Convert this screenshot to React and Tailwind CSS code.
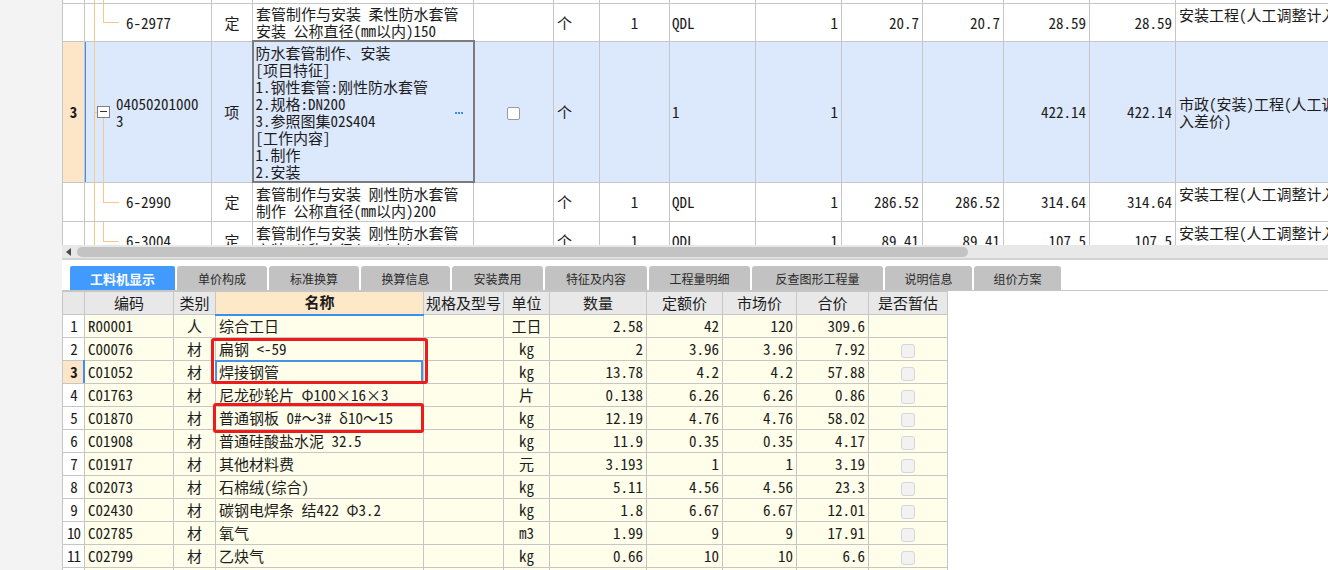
import React from "react";

const line = "bg-[#f5c890]";

const topRows = [
  {
    code: "6-2977",
    name: ["套管制作与安装 柔性防水套管", "安装 公称直径(mm以内)150"],
    v: ["20.7", "20.7", "28.59", "28.59"],
    h: "h-[38px]",
  },
  {
    code: "6-2990",
    name: ["套管制作与安装 刚性防水套管", "制作 公称直径(mm以内)200"],
    v: ["286.52", "286.52", "314.64", "314.64"],
    h: "h-[39px]",
  },
  {
    code: "6-3004",
    name: ["套管制作与安装 刚性防水套管", "安装 公称直径(mm以内)200"],
    v: ["89.41", "89.41", "107.5", "107.5"],
    h: "h-[39px]",
  },
];

const tabs = [
  { t: "单价构成", w: "w-[90px]" },
  { t: "标准换算", w: "w-[90px]" },
  { t: "换算信息", w: "w-[89px]" },
  { t: "安装费用", w: "w-[91px]" },
  { t: "特征及内容", w: "w-[102px]" },
  { t: "工程量明细", w: "w-[101px]" },
  { t: "反查图形工程量", w: "w-[131px]" },
  { t: "说明信息", w: "w-[87px]" },
  { t: "组价方案", w: "w-[87px]" },
];

const items = [
  ["R00001", "人", "综合工日", "工日", "2.58", "42", "120", "309.6"],
  ["C00076", "材", "扁钢 <-59", "kg", "2", "3.96", "3.96", "7.92"],
  ["C01052", "材", "焊接钢管", "kg", "13.78", "4.2", "4.2", "57.88"],
  ["C01763", "材", "尼龙砂轮片 Φ100×16×3", "片", "0.138", "6.26", "6.26", "0.86"],
  ["C01870", "材", "普通钢板 0#～3# δ10～15", "kg", "12.19", "4.76", "4.76", "58.02"],
  ["C01908", "材", "普通硅酸盐水泥 32.5", "kg", "11.9", "0.35", "0.35", "4.17"],
  ["C01917", "材", "其他材料费", "元", "3.193", "1", "1", "3.19"],
  ["C02073", "材", "石棉绒(综合)", "kg", "5.11", "4.56", "4.56", "23.3"],
  ["C02430", "材", "碳钢电焊条 结422 Φ3.2", "kg", "1.8", "6.67", "6.67", "12.01"],
  ["C02785", "材", "氧气", "m3", "1.99", "9", "9", "17.91"],
  ["C02799", "材", "乙炔气", "kg", "0.66", "10", "10", "6.6"],
  ["", "", "", "", "", "", "", ""],
];

const td = "border border-[#c6c6c6] p-0 overflow-hidden whitespace-nowrap";
const bd = "border border-[#c6c6c6] p-0 pb-[2px] overflow-hidden whitespace-nowrap";

function ChildRow({ r }) {
  return (
    <tr className={r.h}>
      <td className={td}></td>
      <td className={`${td} relative`}>
        <span className={`absolute left-[9px] top-0 bottom-0 w-px ${line}`} />
        <span className={`absolute left-[18px] top-0 h-1/2 w-px ${line}`} />
        <span className={`absolute left-[18px] top-1/2 w-[16px] h-px ${line}`} />
        <span className="pl-[41px]">{r.code}</span>
      </td>
      <td className={`${td} text-center`}>定</td>
      <td className={`${td} px-[3px] leading-[17px]`}>
        {r.name[0]}
        <br />
        {r.name[1]}
      </td>
      <td className={td}></td>
      <td className={`${td} pl-[3px]`}>个</td>
      <td className={`${td} text-center`}>1</td>
      <td className={`${td} pl-[2px]`}>QDL</td>
      <td className={`${td} text-right pr-[3px]`}>1</td>
      {r.v.map((x, i) => (
        <td key={i} className={`${td} text-right pr-[3px]`}>
          {x}
        </td>
      ))}
      <td className={`${td} pl-[3px] whitespace-normal leading-[17px] align-top pt-[2px]`}>
        安装工程(人工调整计入差价)
      </td>
    </tr>
  );
}

export default function App() {
  return (
    <div className="w-[1328px] h-[570px] overflow-hidden flex bg-white text-[15px] leading-[19px] text-[#1c1c1c] font-['Noto_Sans_Mono_CJK_SC','Noto_Sans_CJK_SC',monospace]">
      <div className="w-[62px] shrink-0 bg-[#f3f3f3]" />
      <div className="flex-1 min-w-0 flex flex-col">
        {/* 上方清单表 */}
        <div className="h-[245px] overflow-hidden shrink-0">
          <table className="table-fixed border-collapse w-[1309px]">
            <colgroup>
              <col className="w-[22px]" />
              <col className="w-[127px]" />
              <col className="w-[41px]" />
              <col className="w-[221px]" />
              <col className="w-[80px]" />
              <col className="w-[46px]" />
              <col className="w-[70px]" />
              <col className="w-[86px]" />
              <col className="w-[86px]" />
              <col className="w-[81px]" />
              <col className="w-[81px]" />
              <col className="w-[86px]" />
              <col className="w-[86px]" />
              <col className="w-[196px]" />
            </colgroup>
            <tbody>
              <tr className="h-[3px]">
                <td className="border-x border-[#c6c6c6] p-0"></td>
                <td className="border-x border-[#c6c6c6] p-0 relative">
                  <span className={`absolute left-[9px] top-0 bottom-0 w-px ${line}`} />
                  <span className={`absolute left-[18px] top-0 bottom-0 w-px ${line}`} />
                </td>
                {Array.from({ length: 12 }).map((_, i) => (
                  <td key={i} className="border-x border-[#c6c6c6] p-0"></td>
                ))}
              </tr>
              <ChildRow r={topRows[0]} />
              <tr className="h-[141px] bg-[#dce8fc]">
                <td className={`${td} bg-[#fde6c8] text-center font-bold`}>3</td>
                <td className={`${td} relative`}>
                  <span className="absolute -left-px top-0 bottom-0 w-[2px] bg-[#3b8ff2]" />
                  <span className={`absolute left-[9px] top-0 bottom-0 w-px ${line}`} />
                  <span className={`absolute left-[9px] top-[70px] w-[4px] h-px ${line}`} />
                  <span className={`absolute left-[18px] top-[76px] bottom-0 w-px ${line}`} />
                  <span className="absolute left-[12px] top-[64px] w-[13px] h-[12px] border border-[#808080] bg-white flex items-center justify-center">
                    <span className="w-[7px] h-px bg-[#333]" />
                  </span>
                  <div className="pl-[31px] leading-[17px]">
                    04050201000
                    <br />3
                  </div>
                </td>
                <td className={`${td} text-center`}>项</td>
                <td className="border-2 border-[#7c7c7c] p-0 relative align-top">
                  <div className="px-[2px] pt-[2px] leading-[17px] whitespace-nowrap">
                    防水套管制作、安装
                    <br />
                    [项目特征]
                    <br />
                    1.钢性套管:刚性防水套管
                    <br />
                    2.规格:DN200
                    <br />
                    3.参照图集02S404
                    <br />
                    [工作内容]
                    <br />
                    1.制作
                    <br />
                    2.安装
                  </div>
                  <span className="absolute right-[10px] top-[70px] flex gap-[1px]">
                    <span className="w-[2px] h-[2px] bg-[#3a8ee6]" />
                    <span className="w-[2px] h-[2px] bg-[#3a8ee6]" />
                    <span className="w-[2px] h-[2px] bg-[#3a8ee6]" />
                  </span>
                </td>
                <td className={`${td} text-center`}>
                  <span className="inline-block align-middle w-[13px] h-[13px] border border-[#9a9a9a] rounded-[2px] bg-white" />
                </td>
                <td className={`${td} pl-[3px]`}>个</td>
                <td className={td}></td>
                <td className={`${td} pl-[2px]`}>1</td>
                <td className={`${td} text-right pr-[3px]`}>1</td>
                <td className={td}></td>
                <td className={td}></td>
                <td className={`${td} text-right pr-[3px]`}>422.14</td>
                <td className={`${td} text-right pr-[3px]`}>422.14</td>
                <td className={`${td} pl-[3px] leading-[17px]`}>
                  市政(安装)工程(人工调整计
                  <br />
                  入差价)
                </td>
              </tr>
              <ChildRow r={topRows[1]} />
              <ChildRow r={topRows[2]} />
            </tbody>
          </table>
        </div>

        {/* 横向滚动条 */}
        <div className="h-[15px] shrink-0 bg-[#e8e8e8] border-b-2 border-[#d2d2d2] flex items-center">
          <span className="ml-[4px] w-0 h-0 border-y-[4px] border-y-transparent border-r-[5px] border-r-[#4a4a4a]" />
          <span className="ml-[6px] w-[891px] h-[10px] rounded-full bg-[#c3c3c3]" />
        </div>

        {/* 页签 */}
        <div className="shrink-0 pt-[6px] pl-[8px] flex gap-[2px] border-b border-[#c6c6c6] font-['Noto_Sans_CJK_SC',sans-serif] text-[12px]">
          <div className="w-[105px] h-[24px] rounded-t-[2px] bg-[#419bff] text-white font-bold text-[13px] flex items-center justify-center">
            工料机显示
          </div>
          {tabs.map((t) => (
            <div
              key={t.t}
              className={`${t.w} h-[24px] rounded-t-[3px] bg-[#c2c2c2] text-[#2a2a2a] flex items-center justify-center`}
            >
              {t.t}
            </div>
          ))}
        </div>

        {/* 工料机明细 */}
        <div className="relative flex-1">
          <table className="table-fixed border-collapse w-[885px]">
            <colgroup>
              <col className="w-[22px]" />
              <col className="w-[89px]" />
              <col className="w-[42px]" />
              <col className="w-[208px]" />
              <col className="w-[80px]" />
              <col className="w-[46px]" />
              <col className="w-[97px]" />
              <col className="w-[76px]" />
              <col className="w-[74px]" />
              <col className="w-[72px]" />
              <col className="w-[79px]" />
            </colgroup>
            <thead>
              <tr className="h-[23px] bg-[#e8e8e8]">
                <th className={`${bd} font-normal`}></th>
                <th className={`${bd} font-normal`}>编码</th>
                <th className={`${bd} font-normal`}>类别</th>
                <th className="border border-[#c6c6c6] border-b-2 border-b-[#3b8ff2] p-0 pb-[2px] bg-[#fde8c8] font-bold">
                  名称
                </th>
                <th className={`${bd} font-normal`}>规格及型号</th>
                <th className={`${bd} font-normal`}>单位</th>
                <th className={`${bd} font-normal`}>数量</th>
                <th className={`${bd} font-normal`}>定额价</th>
                <th className={`${bd} font-normal`}>市场价</th>
                <th className={`${bd} font-normal`}>合价</th>
                <th className={`${bd} font-normal`}>是否暂估</th>
              </tr>
            </thead>
            <tbody>
              {items.map((r, i) => (
                <tr key={i} className="h-[23px] bg-[#fefeea]">
                  <td
                    className={`${bd} text-center tracking-[-1px] ${
                      i === 2 ? "bg-[#fde6c8] font-bold" : "bg-white"
                    }`}
                  >
                    {r[0] ? i + 1 : ""}
                  </td>
                  <td className={`${bd} pl-[3px]`}>{r[0]}</td>
                  <td className={`${bd} text-center`}>{r[1]}</td>
                  <td className={`${bd} pl-[3px]`}>{r[2]}</td>
                  <td className={bd}></td>
                  <td className={`${bd} text-center`}>{r[3]}</td>
                  <td className={`${bd} text-right pr-[3px]`}>{r[4]}</td>
                  <td className={`${bd} text-right pr-[3px]`}>{r[5]}</td>
                  <td className={`${bd} text-right pr-[3px]`}>{r[6]}</td>
                  <td className={`${bd} text-right pr-[3px]`}>{r[7]}</td>
                  <td className={`${td} text-center`}>
                    {i > 0 && r[0] && (
                      <span className="inline-block align-middle w-[14px] h-[14px] border border-[#d6d6d6] rounded-[3px] bg-[#f2f2f2]" />
                    )}
                  </td>
                </tr>
              ))}
            </tbody>
          </table>

          {/* 当前行标记与选中单元格 */}
          <span className="absolute left-[21px] top-[69px] w-[2px] h-[23px] bg-[#3b8ff2]" />
          <span className="absolute left-[153px] top-[69px] w-[208px] h-[24px] border-2 border-[#4a92e8]" />

          {/* 红框标注 */}
          <span className="absolute left-[149px] top-[47px] w-[217px] h-[46px] border-[3px] border-[#ec1c1c] rounded-[3px]" />
          <span className="absolute left-[151px] top-[112px] w-[211px] h-[30px] border-[3px] border-[#ec1c1c] rounded-[3px]" />
        </div>
      </div>
    </div>
  );
}
